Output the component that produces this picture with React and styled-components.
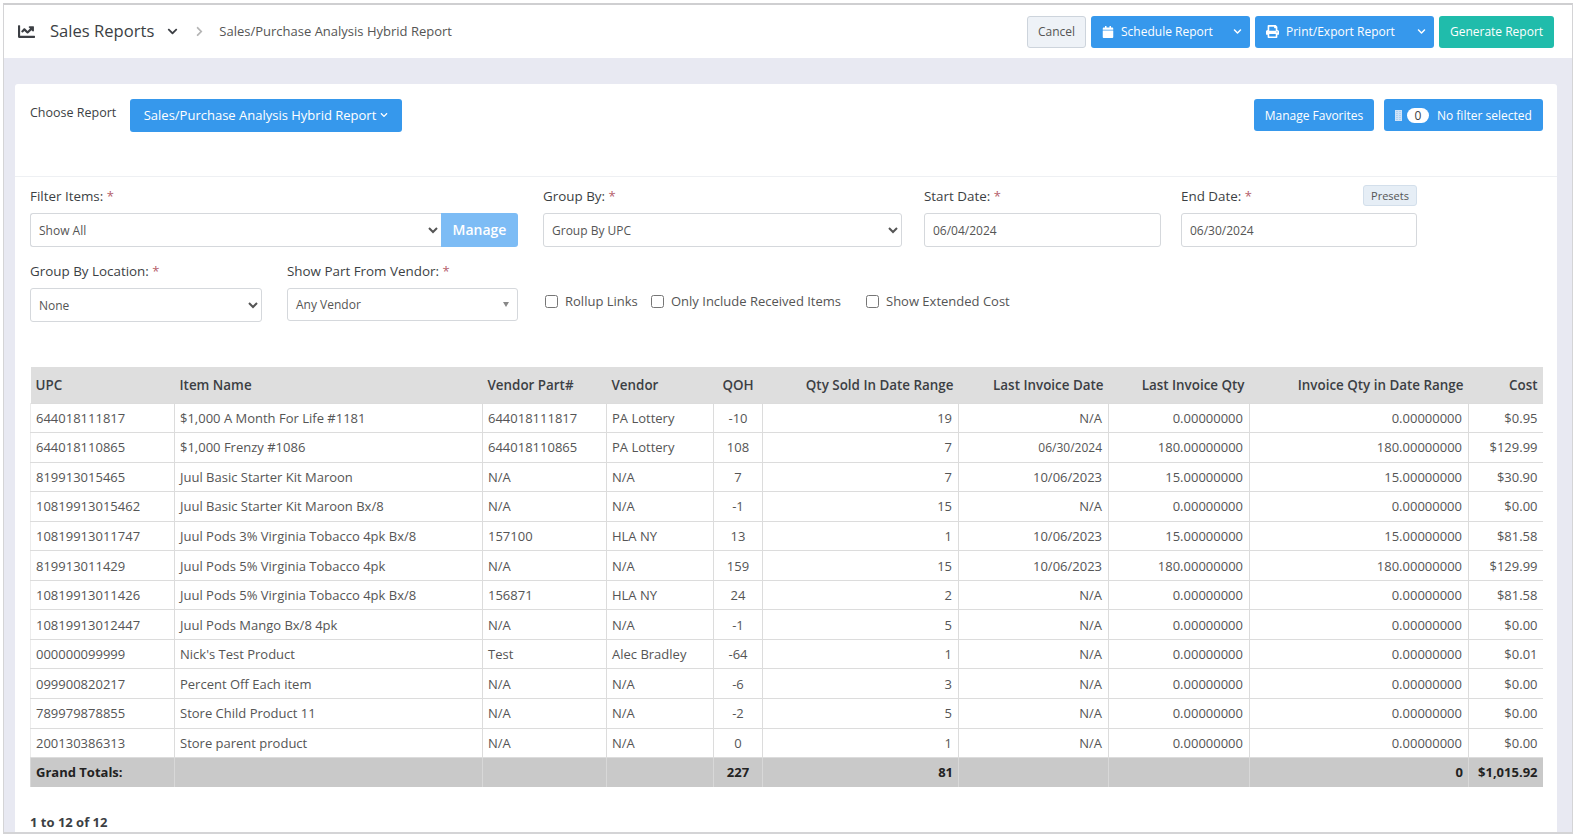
import React from 'react';
import styled, { createGlobalStyle } from 'styled-components';
import { FaChartLine, FaChevronDown, FaChevronRight, FaCalendar, FaPrint } from 'react-icons/fa';

// ========== STYLED COMPONENTS ==========

const GlobalStyle = createGlobalStyle`
  html, body {
    margin: 0;
    padding: 0;
    background: #fff;
    font-family: "Open Sans", "Liberation Sans", sans-serif;
    font-size: 13px;
    color: #555;
  }
  * { box-sizing: border-box; }
`;

const Frame = styled.div`
  margin: 3px 3px 0;
  height: 831px;
  border: 1px solid #d4d4d6;
  border-top: 2px solid #cfcfd1;
  border-bottom-width: 2px;
  background: #e8e9f2;
  display: flex;
  flex-direction: column;
  overflow: hidden;
`;

const TopBar = styled.header`
  height: 53px;
  flex-shrink: 0;
  background: #fff;
  display: flex;
  align-items: center;
  justify-content: space-between;
  padding: 0 18px 0 14px;
`;

const Crumbs = styled.div`
  display: flex;
  align-items: center;
  color: #3c3f44;
`;

const Title = styled.span`
  font-size: 16.6px;
  margin-left: 15px;
  padding-bottom: 2px;
  color: #3c3f44;
`;

const Current = styled.span`
  font-size: 13px;
  color: #555;
  margin-left: 14px;
  padding-bottom: 2px;
`;

const Actions = styled.div`
  display: flex;
  gap: 5px;
`;

const Button = styled.button`
  height: ${props => props.$height || 32}px;
  width: ${props => props.$width}px;
  border: 0;
  border-radius: 3px;
  padding: 0;
  display: flex;
  align-items: center;
  justify-content: center;
  gap: 7px;
  font-family: inherit;
  font-size: 12px;
  color: #fff;
  background: ${props => props.$bg || '#3698ec'};
`;

const CancelButton = styled(Button)`
  background: #eef2f7;
  border: 1px solid #cdd4dc;
  color: #555;
`;

const SplitButton = styled(Button)`
  justify-content: space-between;
  padding: 0 8px 0 11px;
`;

const SplitLabel = styled.span`
  display: flex;
  align-items: center;
  gap: 7px;
`;

const Card = styled.main`
  flex: 1;
  margin: 26px 15px 0 11px;
  background: #fff;
  border-radius: 3px 3px 0 0;
  display: flex;
  flex-direction: column;
`;

const ReportBar = styled.div`
  height: 93px;
  flex-shrink: 0;
  padding: 15px 14px 0 15px;
  display: flex;
  justify-content: space-between;
  align-items: flex-start;
  border-bottom: 1px solid #eef0f3;
`;

const ChooseWrap = styled.div`
  display: flex;
  align-items: flex-start;
`;

const ChooseLabel = styled.span`
  font-size: 12.5px;
  color: #3c3f44;
  width: 100px;
  padding-top: 5px;
`;

const ReportButton = styled(Button)`
  font-size: 13px;
  gap: 4px;
  padding-bottom: 1px;
`;

const RightActions = styled.div`
  display: flex;
  gap: 10px;
`;

const FilterButton = styled(Button)`
  justify-content: flex-start;
  gap: 0;
  padding-left: 11px;
`;

const FilterIcon = styled.svg`
  width: 7px;
  height: 11px;
  margin-right: 5px;
`;

const CountPill = styled.span`
  width: 22px;
  height: 15px;
  border-radius: 8px;
  background: #fff;
  color: #3c3f44;
  font-size: 12px;
  line-height: 15px;
  text-align: center;
  margin-right: 8px;
`;

const Filters = styled.section`
  padding: 9px 15px 0;
`;

const FilterRow = styled.div`
  display: flex;
  align-items: flex-start;
  height: ${props => props.$height}px;
`;

const Field = styled.div`
  width: ${props => props.$width}px;
  margin-left: ${props => props.$left || 0}px;
  position: relative;
`;

const Label = styled.label`
  display: block;
  height: 27px;
  line-height: 20px;
  font-size: 13.4px;
  font-weight: 500;
  color: #3c3f44;
`;

const Req = styled.span`
  color: #b5606a;
  font-size: 13px;
`;

const InputGroup = styled.div`
  display: flex;
`;

const NativeSelect = styled.select`
  flex: 1;
  min-width: 0;
  width: 100%;
  height: 34px;
  border: 1px solid #d5d8dc;
  border-radius: ${props => props.$joined ? '3px 0 0 3px' : '3px'};
  border-right-width: ${props => props.$joined ? 0 : 1}px;
  background: #fff;
  padding: 0 4px;
  font-family: inherit;
  font-size: 12px;
  color: #555;
`;

const ManageButton = styled.button`
  width: 77px;
  height: 34px;
  border: 0;
  border-radius: 0 3px 3px 0;
  background: #7dbcf5;
  color: #fff;
  font-family: inherit;
  font-size: 14px;
  font-weight: 600;
  padding: 0 0 2px;
`;

const DateInput = styled.input`
  width: 100%;
  height: 34px;
  border: 1px solid #d5d8dc;
  border-radius: 3px;
  padding: 0 8px;
  font-family: inherit;
  font-size: 12px;
  color: #555;
`;

const PresetsButton = styled.button`
  position: absolute;
  right: 0;
  top: -1px;
  width: 54px;
  height: 21px;
  border: 1px solid #d3dfeb;
  border-radius: 3px;
  background: #e6eef6;
  color: #555;
  font-family: inherit;
  font-size: 11px;
  padding: 0;
`;

const VendorSelect = styled.div`
  height: 33px;
  border: 1px solid #d5d8dc;
  border-radius: 3px;
  padding: 0 8px;
  display: flex;
  align-items: center;
  justify-content: space-between;
  font-size: 12px;
  color: #555;
`;

const Caret = styled.span`
  width: 0;
  height: 0;
  border-left: 3.5px solid transparent;
  border-right: 3.5px solid transparent;
  border-top: 5px solid #888;
`;

const Checks = styled.div`
  display: flex;
  align-items: center;
  margin-left: 26px;
  margin-top: 30px;
  height: 20px;
`;

const CheckLabel = styled.label`
  display: flex;
  align-items: center;
  width: ${props => props.$width}px;
  font-size: 13px;
  color: #555;
`;

const Check = styled.input`
  width: 13px;
  height: 13px;
  margin: 0 7px 0 1px;
`;

const TableWrap = styled.div`
  padding: 0 15px;
`;

const Table = styled.table`
  width: 1512px;
  table-layout: fixed;
  border-collapse: collapse;
  font-size: 13px;
  color: #555;
`;

const Col = styled.col`
  width: ${props => props.$width}px;
`;

const HeadCell = styled.th`
  height: 36px;
  padding: 0 5px;
  background: #dedede;
  color: #3c3f44;
  font-weight: 600;
  font-size: 13.4px;
  white-space: nowrap;
  text-align: ${props => props.$align || 'left'};
`;

const Cell = styled.td`
  height: 29.55px;
  padding: ${props => props.$align === 'right' ? '0 6px 0 5px' : '0 5px'};
  border: 1px solid #dcdcdc;
  white-space: nowrap;
  overflow: hidden;
  font-size: ${props => props.$small ? 12 : 13}px;
  text-align: ${props => props.$align || 'left'};
  &:first-child { border-left: 1px solid #ececec; }
  &:last-child { border-right: 0; padding-right: 5px; }
`;

const TotalCell = styled.td`
  height: 29px;
  padding: 0 5px 1px;
  background: #c9c9c9;
  border-left: 1px solid #d8d8d8;
  color: #222;
  font-weight: 700;
  font-size: 13px;
  text-align: ${props => props.$align || 'left'};
`;

const Pager = styled.div`
  padding: 26px 15px 0;
  font-weight: 700;
  font-size: 13px;
  color: #3c3f44;
`;

// ========== DATA ==========

const columns = [
  { name: 'UPC', width: 144 },
  { name: 'Item Name', width: 308 },
  { name: 'Vendor Part#', width: 124 },
  { name: 'Vendor', width: 107 },
  { name: 'QOH', width: 49, align: 'center' },
  { name: 'Qty Sold In Date Range', width: 196, align: 'right' },
  { name: 'Last Invoice Date', width: 150, align: 'right' },
  { name: 'Last Invoice Qty', width: 141, align: 'right' },
  { name: 'Invoice Qty in Date Range', width: 219, align: 'right' },
  { name: 'Cost', width: 74, align: 'right' },
];

const zero = '0.00000000';

const rows = [
  ['644018111817', '$1,000 A Month For Life #1181', '644018111817', 'PA Lottery', '-10', '19', 'N/A', zero, zero, '$0.95'],
  ['644018110865', '$1,000 Frenzy #1086', '644018110865', 'PA Lottery', '108', '7', '06/30/2024', '180.00000000', '180.00000000', '$129.99'],
  ['819913015465', 'Juul Basic Starter Kit Maroon', 'N/A', 'N/A', '7', '7', '10/06/2023', '15.00000000', '15.00000000', '$30.90'],
  ['10819913015462', 'Juul Basic Starter Kit Maroon Bx/8', 'N/A', 'N/A', '-1', '15', 'N/A', zero, zero, '$0.00'],
  ['10819913011747', 'Juul Pods 3% Virginia Tobacco 4pk Bx/8', '157100', 'HLA NY', '13', '1', '10/06/2023', '15.00000000', '15.00000000', '$81.58'],
  ['819913011429', 'Juul Pods 5% Virginia Tobacco 4pk', 'N/A', 'N/A', '159', '15', '10/06/2023', '180.00000000', '180.00000000', '$129.99'],
  ['10819913011426', 'Juul Pods 5% Virginia Tobacco 4pk Bx/8', '156871', 'HLA NY', '24', '2', 'N/A', zero, zero, '$81.58'],
  ['10819913012447', 'Juul Pods Mango Bx/8 4pk', 'N/A', 'N/A', '-1', '5', 'N/A', zero, zero, '$0.00'],
  ['000000099999', "Nick's Test Product", 'Test', 'Alec Bradley', '-64', '1', 'N/A', zero, zero, '$0.01'],
  ['099900820217', 'Percent Off Each item', 'N/A', 'N/A', '-6', '3', 'N/A', zero, zero, '$0.00'],
  ['789979878855', 'Store Child Product 11', 'N/A', 'N/A', '-2', '5', 'N/A', zero, zero, '$0.00'],
  ['200130386313', 'Store parent product', 'N/A', 'N/A', '0', '1', 'N/A', zero, zero, '$0.00'],
];

const totals = ['Grand Totals:', '', '', '', '227', '81', '', '', '0', '$1,015.92'];

// ========== COMPONENT ==========

const Required = () => <Req>*</Req>;

const App = () => (
  <>
    <GlobalStyle />
    <Frame>
      <TopBar>
        <Crumbs>
          <FaChartLine size={17} />
          <Title>Sales Reports</Title>
          <FaChevronDown size={11} style={{ marginLeft: 13 }} />
          <FaChevronRight size={11} color="#b5b5b5" style={{ marginLeft: 16 }} />
          <Current>Sales/Purchase Analysis Hybrid Report</Current>
        </Crumbs>
        <Actions>
          <CancelButton $width={59}>Cancel</CancelButton>
          <SplitButton $width={159}>
            <SplitLabel><FaCalendar size={12} />Schedule Report</SplitLabel>
            <FaChevronDown size={9} />
          </SplitButton>
          <SplitButton $width={179}>
            <SplitLabel><FaPrint size={13} />Print/Export Report</SplitLabel>
            <FaChevronDown size={9} />
          </SplitButton>
          <Button $width={115} $bg="#20bcab">Generate Report</Button>
        </Actions>
      </TopBar>

      <Card>
        <ReportBar>
          <ChooseWrap>
            <ChooseLabel>Choose Report</ChooseLabel>
            <ReportButton $width={272} $height={33}>
              Sales/Purchase Analysis Hybrid Report
              <FaChevronDown size={8} />
            </ReportButton>
          </ChooseWrap>
          <RightActions>
            <Button $width={120}>Manage Favorites</Button>
            <FilterButton $width={159}>
              <FilterIcon viewBox="0 0 7 11">
                <path fill="#cfe3f8" d="M0 0h7v11H0z" />
                <path stroke="#8dbdec" strokeWidth="1" strokeDasharray="1 1" d="M2 1v9M5 1v9" />
              </FilterIcon>
              <CountPill>0</CountPill>
              No filter selected
            </FilterButton>
          </RightActions>
        </ReportBar>

        <Filters>
          <FilterRow $height={75}>
            <Field $width={488}>
              <Label>Filter Items: <Required /></Label>
              <InputGroup>
                <NativeSelect $joined defaultValue="all">
                  <option value="all">Show All</option>
                </NativeSelect>
                <ManageButton>Manage</ManageButton>
              </InputGroup>
            </Field>
            <Field $width={359} $left={25}>
              <Label>Group By: <Required /></Label>
              <NativeSelect defaultValue="upc">
                <option value="upc">Group By UPC</option>
              </NativeSelect>
            </Field>
            <Field $width={237} $left={22}>
              <Label>Start Date: <Required /></Label>
              <DateInput defaultValue="06/04/2024" />
            </Field>
            <Field $width={236} $left={20}>
              <Label>End Date: <Required /></Label>
              <PresetsButton>Presets</PresetsButton>
              <DateInput defaultValue="06/30/2024" />
            </Field>
          </FilterRow>
          <FilterRow $height={106}>
            <Field $width={232}>
              <Label>Group By Location: <Required /></Label>
              <NativeSelect defaultValue="none">
                <option value="none">None</option>
              </NativeSelect>
            </Field>
            <Field $width={231} $left={25}>
              <Label>Show Part From Vendor: <Required /></Label>
              <VendorSelect>Any Vendor<Caret /></VendorSelect>
            </Field>
            <Checks>
              <CheckLabel $width={106}><Check type="checkbox" />Rollup Links</CheckLabel>
              <CheckLabel $width={215}><Check type="checkbox" />Only Include Received Items</CheckLabel>
              <CheckLabel $width={180}><Check type="checkbox" />Show Extended Cost</CheckLabel>
            </Checks>
          </FilterRow>
        </Filters>

        <TableWrap>
          <Table>
            <colgroup>
              {columns.map(col => <Col key={col.name} $width={col.width} />)}
            </colgroup>
            <thead>
              <tr>
                {columns.map(col => (
                  <HeadCell key={col.name} $align={col.align}>{col.name}</HeadCell>
                ))}
              </tr>
            </thead>
            <tbody>
              {rows.map(row => (
                <tr key={row[0]}>
                  {row.map((value, index) => (
                    <Cell
                      key={index}
                      $align={columns[index].align}
                      $small={value === '06/30/2024'}
                    >
                      {value}
                    </Cell>
                  ))}
                </tr>
              ))}
            </tbody>
            <tfoot>
              <tr>
                {totals.map((value, index) => (
                  <TotalCell key={index} $align={columns[index].align}>{value}</TotalCell>
                ))}
              </tr>
            </tfoot>
          </Table>
        </TableWrap>

        <Pager>1 to 12 of 12</Pager>
      </Card>
    </Frame>
  </>
);

export default App;
